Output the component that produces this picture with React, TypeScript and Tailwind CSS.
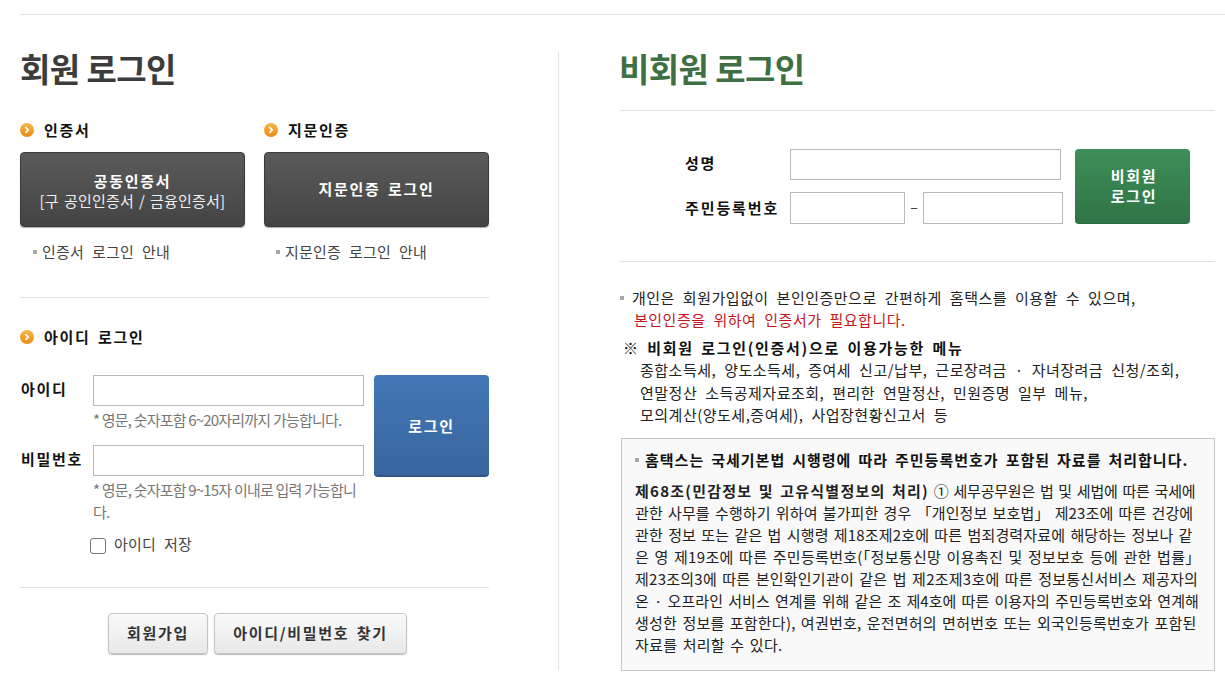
import React from 'react'

const font = "[font-family:'Noto_Sans_CJK_KR','Liberation_Sans',sans-serif]"

// the screenshot's Korean font has a wider pitch than Noto, so these get used everywhere
const boldText = 'text-[15px] font-bold tracking-[1.7px] [word-spacing:2.4px]'
const bodyText = 'text-[15px] tracking-[0.2px] [word-spacing:4.4px]'
const noticeText = 'text-[15px] tracking-[0.5px] [word-spacing:4.1px]'

const Bullet = () => (
  <svg width="14" height="14" viewBox="0 0 14 14" className="shrink-0">
    <defs>
      <linearGradient id="orb" x1="0" y1="0" x2="0" y2="1">
        <stop offset="0" stopColor="#f9b64a" />
        <stop offset="1" stopColor="#ea8a12" />
      </linearGradient>
    </defs>
    <circle cx="7" cy="7" r="7" fill="url(#orb)" />
    <path d="M5.4 4.2 L8.2 7 L5.4 9.8" fill="none" stroke="#fff" strokeWidth="1.7" />
  </svg>
)

const SectionTitle = ({ text }: { text: string }) => (
  <div className="flex items-center gap-[10px] h-5">
    <Bullet />
    <span className={`${boldText} text-[#111] whitespace-nowrap`}>{text}</span>
  </div>
)

const Square = () => <span className="inline-block w-[4px] h-[4px] bg-[#a8a8a8] shrink-0" />

const DarkButton = ({ children }: { children: React.ReactNode }) => (
  <div className="w-[225px] h-[75px] rounded-[4px] border border-[#3a3a3a] bg-gradient-to-b from-[#5a5a5a] to-[#444] shadow-[0_1px_1px_#aaa] flex flex-col items-center justify-center text-white leading-5">
    {children}
  </div>
)

const GreyButton = ({ text, w }: { text: string; w: string }) => (
  <div className={`${w} ${boldText} h-[41px] rounded-[4px] border border-[#c4c4c4] bg-gradient-to-b from-[#fafafa] to-[#e8e8e8] shadow-[0_1px_1px_#bbb] flex items-center justify-center text-[#333]`}>
    {text}
  </div>
)

const inputClass = 'block bg-white border border-[#b9b9b9] outline-none'
const hintClass = 'text-[15px] leading-[22px] text-[#777] tracking-[-0.8px] whitespace-nowrap'

// every line of the law text has its own pitch in the reference
const lawLines = [
  { text: '관한 사무를 수행하기 위하여 불가피한 경우 「개인정보 보호법」 제23조에 따른 건강에', cls: 'tracking-[0.12px]' },
  { text: '관한 정보 또는 같은 법 시행령 제18조제2호에 따른 범죄경력자료에 해당하는 정보나 같', cls: 'tracking-[0.16px]' },
  { text: '은 영 제19조에 따른 주민등록번호(「정보통신망 이용촉진 및 정보보호 등에 관한 법률」', cls: 'tracking-[0.32px]' },
  { text: '제23조의3에 따른 본인확인기관이 같은 법 제2조제3호에 따른 정보통신서비스 제공자의', cls: 'tracking-[0.25px]' },
  { text: '온 · 오프라인 서비스 연계를 위해 같은 조 제4호에 따른 이용자의 주민등록번호와 연계해', cls: 'tracking-[0.07px]' },
  { text: '생성한 정보를 포함한다), 여권번호, 운전면허의 면허번호 또는 외국인등록번호가 포함된', cls: 'tracking-[0.23px]' },
  { text: '자료를 처리할 수 있다.', cls: 'tracking-[0.3px]' },
]

const App = () => {
  return (
    <div className={`${font} w-[1225px] h-[679px] overflow-hidden bg-white pt-[14px] pl-[20px]`}>
      <div className="border-t border-[#e2e2e2] flex pt-[37px]">
        {/* member login */}
        <div className="w-[469px] shrink-0">
          <h1 className="h-[34px] leading-[32px] text-[33px] font-bold text-[#3c3c3c] tracking-[-0.6px] whitespace-nowrap">회원 로그인</h1>

          <div className="flex gap-[19px] mt-[34px]">
            <div className="w-[225px]">
              <SectionTitle text="인증서" />
              <div className="mt-[12px]">
                <DarkButton>
                  <span className={`${boldText} translate-y-px`}>공동인증서</span>
                  <span className="text-[15px] tracking-[0.2px] [word-spacing:1.5px] text-[#eee] whitespace-nowrap translate-y-px">[구 공인인증서 / 금융인증서]</span>
                </DarkButton>
              </div>
              <div className={`${bodyText} flex items-center gap-[5px] mt-[15px] pl-[13px] h-5 text-[#444]`}>
                <Square />
                <span>인증서 로그인 안내</span>
              </div>
            </div>
            <div className="w-[225px]">
              <SectionTitle text="지문인증" />
              <div className="mt-[12px]">
                <DarkButton>
                  <span className={`${boldText} -translate-y-px`}>지문인증 로그인</span>
                </DarkButton>
              </div>
              <div className={`${bodyText} flex items-center gap-[5px] mt-[15px] pl-[12px] h-5 text-[#444]`}>
                <Square />
                <span>지문인증 로그인 안내</span>
              </div>
            </div>
          </div>

          <div className="border-t border-[#e2e2e2] mt-[35px]" />

          <div className="mt-[29px]">
            <SectionTitle text="아이디 로그인" />
          </div>

          <div className="flex mt-[28px]">
            <div className={`${boldText} w-[73px] shrink-0 text-[#111] pl-px`}>
              <div className="h-5 mt-[4px] leading-5">아이디</div>
              <div className="h-5 mt-[50px] leading-5 whitespace-nowrap">비밀번호</div>
            </div>
            <div className="w-[271px] shrink-0">
              <input className={`${inputClass} w-full h-[31px]`} />
              <p className={`${hintClass} mt-[3px] h-[36px]`}>* 영문, 숫자포함 6~20자리까지 가능합니다.</p>
              <input className={`${inputClass} w-full h-[31px]`} />
              <p className={`${hintClass} mt-[3px]`}>
                * 영문, 숫자포함 9~15자 이내로 입력 가능합니<br />다.
              </p>
              <label className="flex items-center gap-2 mt-[13px] -ml-[3px] h-5">
                <span className="w-4 h-4 rounded-[3px] border border-[#767676] bg-white shrink-0" />
                <span className={`${bodyText} text-[#444] -translate-y-[2px]`}>아이디 저장</span>
              </label>
            </div>
            <div className={`${boldText} ml-[10px] w-[115px] h-[102px] pt-[2px] rounded-[4px] bg-gradient-to-b from-[#4477b5] to-[#38669f] border-b-2 border-[#2f5788] flex items-center justify-center text-white`}>
              로그인
            </div>
          </div>

          <div className="border-t border-[#e2e2e2] mt-[31px]" />

          <div className="flex gap-[6px] mt-[25px] pl-[88px]">
            <GreyButton text="회원가입" w="w-[100px]" />
            <GreyButton text="아이디/비밀번호 찾기" w="w-[193px]" />
          </div>
        </div>

        {/* divider */}
        <div className="w-px h-[618px] bg-[#e2e2e2] ml-[69px] shrink-0" />

        {/* non-member login */}
        <div className="w-[595px] ml-[61px] shrink-0">
          <h1 className="h-[34px] -ml-px leading-[32px] text-[33px] font-bold text-[#3f7044] tracking-[-0.6px] whitespace-nowrap">비회원 로그인</h1>
          <div className="border-t border-[#e2e2e2] mt-[24px]" />

          <div className="flex mt-[38px] pl-[65px]">
            <div className={`${boldText} w-[105px] shrink-0 text-[#111]`}>
              <div className="h-[31px] leading-[28px]">성명</div>
              <div className="h-[32px] leading-[32px] mt-[12px] whitespace-nowrap tracking-[1.9px]">주민등록번호</div>
            </div>
            <div className="w-[285px] shrink-0">
              <input className={`${inputClass} w-[271px] h-[31px]`} />
              <div className="flex items-center mt-[12px]">
                <input className={`${inputClass} w-[115px] h-[32px]`} />
                <span className="w-[18px] text-center text-sm text-[#333] -translate-y-[2px]">–</span>
                <input className={`${inputClass} w-[140px] h-[32px]`} />
              </div>
            </div>
            <div className={`${boldText} w-[115px] h-[75px] pl-[3px] rounded-[4px] bg-gradient-to-b from-[#3e8f58] to-[#2f7446] border-b border-[#2a6a40] flex items-center justify-center text-center !leading-5 text-white`}>
              비회원<br />로그인
            </div>
          </div>

          <div className="border-t border-[#e2e2e2] mt-[37px]" />

          <div className={`${noticeText} mt-[25px] leading-[22px] text-[#222] whitespace-nowrap`}>
            <div className="flex items-center gap-[8px]">
              <Square />
              <span>개인은 회원가입없이 본인인증만으로 간편하게 홈택스를 이용할 수 있으며,</span>
            </div>
            <div className="pl-[14px] text-[#c4161c]">본인인증을 위하여 인증서가 필요합니다.</div>
            <div className={`${boldText} mt-[6px] pl-[3px] text-[#111] leading-[22px]`}>※ 비회원 로그인(인증서)으로 이용가능한 메뉴</div>
            <div className="pl-[20px] leading-[22.5px]">
              <div>종합소득세, 양도소득세, 증여세 신고/납부, 근로장려금 · 자녀장려금 신청/조회,</div>
              <div>연말정산 소득공제자료조회, 편리한 연말정산, 민원증명 일부 메뉴,</div>
              <div>모의계산(양도세,증여세), 사업장현황신고서 등</div>
            </div>
          </div>

          <div className="mt-[11px] ml-px w-[594px] h-[233px] border border-[#c6c6c6] bg-[#f9f9f9] pl-[13px] pt-[9px] whitespace-nowrap">
            <div className="flex items-center gap-[6px] text-[15px] font-bold tracking-[1px] [word-spacing:2.6px] text-[#111] leading-6">
              <Square />
              <span>홈택스는 국세기본법 시행령에 따라 주민등록번호가 포함된 자료를 처리합니다.</span>
            </div>
            <div className="mt-[8px] text-[15px] [word-spacing:1.7px] leading-[22px] text-[#222]">
              <div className="tracking-[-0.2px]">
                <span className="font-bold text-[#222] tracking-[1.25px]">제68조(민감정보 및 고유식별정보의 처리)</span> ① 세무공무원은 법 및 세법에 따른 국세에
              </div>
              {lawLines.map(line => (
                <div key={line.text} className={line.cls}>{line.text}</div>
              ))}
            </div>
          </div>
        </div>
      </div>
    </div>
  )
}

export default App
